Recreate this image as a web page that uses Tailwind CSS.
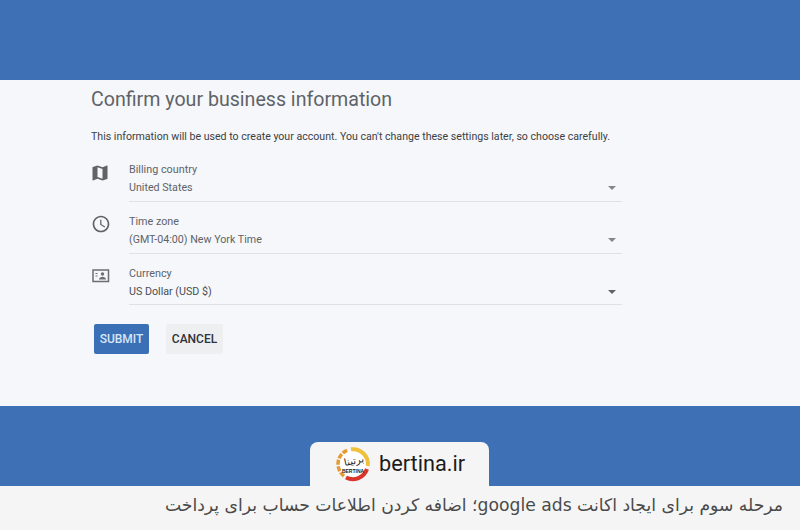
<!DOCTYPE html>
<html lang="en">
<head>
    <meta charset="UTF-8">
    <meta name="viewport" content="width=device-width, initial-scale=1.0">
    <title>Confirm your business information</title>
    <script src="https://cdn.jsdelivr.net/npm/@tailwindcss/browser@4"></script>
</head>
<body class="relative w-[800px] h-[530px] overflow-hidden bg-[#3d70b5] font-['Roboto',sans-serif]">
    <div class="h-20"></div>

    <main class="h-[326px] bg-[#f5f7fa] pl-[91px] pt-[6px]">
        <h1 class="text-[19.6px] leading-7 text-[#5f6368]">Confirm your business information</h1>
        <p class="mt-[15px] text-[10.6px] leading-4 text-[#3c4043]">This information will be used to create your account. You can't change these settings later, so choose carefully.</p>

        <div class="mt-[16px] flex flex-col gap-[11px] w-[531px]">
            <div class="flex h-[41px]">
                <svg class="w-5 h-5 -ml-[1px] mt-[2px] fill-[#5f6368]" viewBox="0 0 24 24"><path d="M20.5 3l-.16.03L15 5.1 9 3 3.36 4.9c-.21.07-.36.25-.36.48V20.5c0 .28.22.5.5.5l.16-.03L9 18.9l6 2.1 5.64-1.9c.21-.07.36-.25.36-.48V3.5c0-.28-.22-.5-.5-.5zM15 19l-6-2.11V5l6 2.11V19z"/></svg>
                <div class="ml-[19px] flex-1 border-b border-[#dfe1e4] relative">
                    <div class="text-[10.8px] leading-[18px] text-[#5f6368]">Billing country</div>
                    <div class="text-[10.7px] leading-[18px] text-[#5f6368]">United States</div>
                    <span class="absolute right-[6px] top-[25px] border-x-[4px] border-t-[4px] border-x-transparent border-t-[#80868b]"></span>
                </div>
            </div>
            <div class="flex h-[41px]">
                <svg class="w-5 h-5 mt-[1px] fill-[#5f6368]" viewBox="0 0 24 24"><path d="M11.99 2C6.47 2 2 6.48 2 12s4.47 10 9.99 10C17.52 22 22 17.52 22 12S17.52 2 11.99 2zM12 20c-4.42 0-8-3.58-8-8s3.58-8 8-8 8 3.58 8 8-3.58 8-8 8z"/><path d="M12.5 7H11v6l5.250 3.150.75-1.230-4.500-2.670z"/></svg>
                <div class="ml-[18px] flex-1 border-b border-[#dfe1e4] relative">
                    <div class="text-[10.8px] leading-[18px] text-[#5f6368]">Time zone</div>
                    <div class="text-[10.7px] leading-[18px] text-[#5f6368]">(GMT-04:00) New York Time</div>
                    <span class="absolute right-[6px] top-[25px] border-x-[4px] border-t-[4px] border-x-transparent border-t-[#80868b]"></span>
                </div>
            </div>
            <div class="flex h-[40px]">
                <svg class="w-[20px] h-[14px] mt-[4px] fill-none stroke-[#6b6f73]" viewBox="0 0 20 14"><rect x="2" y="1" width="15.500" height="11.500" stroke-width="1.500"/><circle cx="11.500" cy="5" r="1.700" fill="#6b6f73" stroke="none"/><path d="M8 10.500c0-2 2-2.800 3.500-2.800s3.500.8 3.500 2.800z" fill="#6b6f73" stroke="none"/><path d="M4.500 4.500h2M4.500 7h2" stroke-width="1.200"/></svg>
                <div class="ml-[18px] flex-1 border-b border-[#dfe1e4] relative">
                    <div class="text-[10.8px] leading-[18px] text-[#5f6368]">Currency</div>
                    <div class="text-[10.7px] leading-[18px] text-[#4a4e52]">US Dollar (USD $)</div>
                    <span class="absolute right-[6px] top-[25px] border-x-[4px] border-t-[4px] border-x-transparent border-t-[#5f6368]"></span>
                </div>
            </div>
        </div>

        <div class="mt-[19px] ml-[3px] flex gap-[17px]">
            <button class="w-[55px] h-[30px] rounded-[2px] bg-[#3b6fb6] text-[12px] font-medium text-[#d6e6f7]">SUBMIT</button>
            <button class="w-[57px] h-[30px] rounded-[2px] bg-[#eeeff1] text-[12px] font-medium text-[#303337]">CANCEL</button>
        </div>
    </main>

    <div class="h-20"></div>

    <footer dir="rtl" class="h-11 bg-[#f5f5f5] pr-[17px] font-['DejaVu_Sans',sans-serif] text-[17.2px] leading-[38px] text-[#4a4a4a]">مرحله سوم برای ایجاد اکانت google ads؛ اضافه کردن اطلاعات حساب برای پرداخت</footer>

    <!-- logo tab sits over the blue band -->
    <div class="absolute left-[310px] top-[442px] w-[179px] h-[44px] rounded-t-[8px] bg-[#f5f5f5] flex items-center pl-[25px] gap-[8px]">
        <svg class="w-9 h-9 shrink-0" viewBox="0 0 36 36">
            <circle cx="18" cy="18" r="14" fill="#fff"/>
            <path d="M16 3.300A15 15 0 0 1 32.800 20" fill="none" stroke="#eec03c" stroke-width="4"/>
            <path d="M9 30A15 15 0 0 1 13 3.900" fill="none" stroke="#e49a35" stroke-width="3.500" stroke-dasharray="5 1.500"/>
            <path d="M11 31.500A15 15 0 0 0 32 23" fill="none" stroke="#d8352c" stroke-width="4"/>
            <text x="19" y="18" text-anchor="middle" font-size="10" font-family="'DejaVu Sans',sans-serif" fill="#222" transform="rotate(-12 19 15)">برتینا</text>
            <text x="18" y="27" text-anchor="middle" font-size="5" font-weight="700" font-family="'Liberation Sans',sans-serif" fill="#222">BERTINA</text>
        </svg>
        <span class="text-[21.7px] leading-none text-[#1c1c1c]">bertina.ir</span>
    </div>
</body>
</html>
